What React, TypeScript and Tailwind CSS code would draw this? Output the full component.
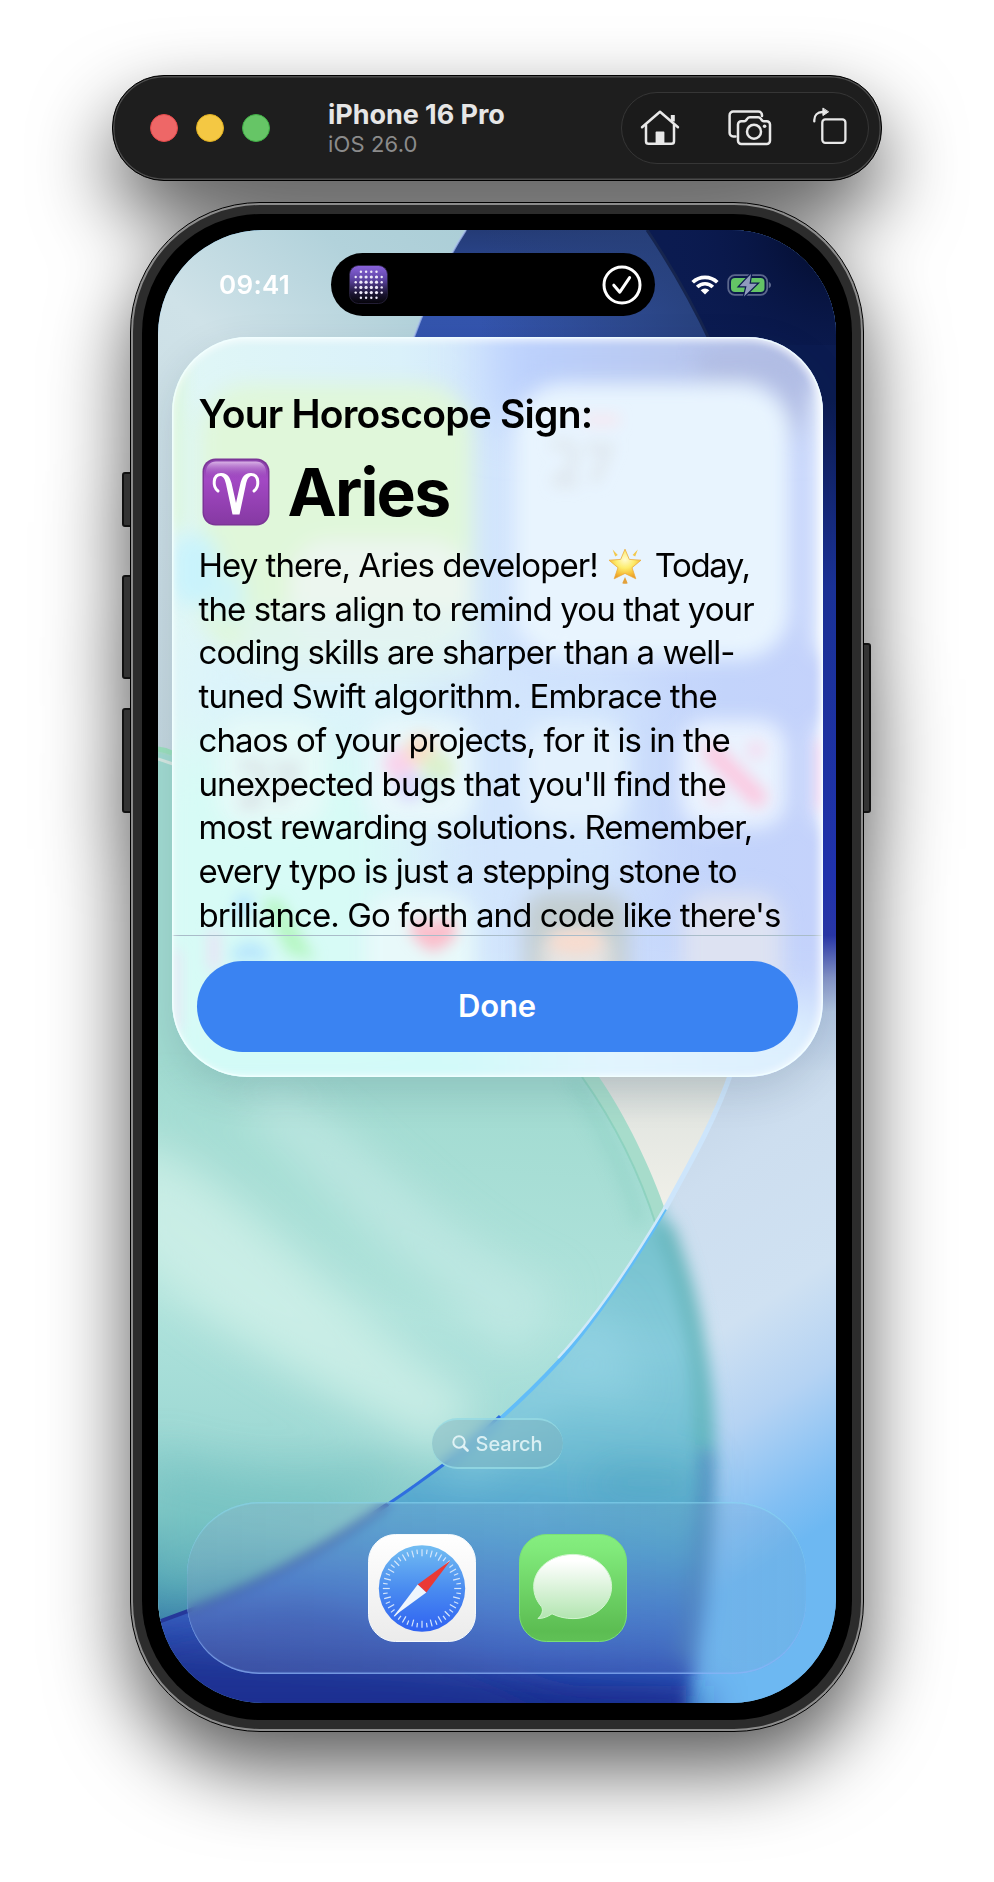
import React from "react";

const STORY = [
  { text: "the stars align to remind you that your", cls: "tracking-[-0.890px]" },
  { text: "coding skills are sharper than a well-", cls: "tracking-[-0.970px]" },
  { text: "tuned Swift algorithm. Embrace the", cls: "tracking-[-0.880px]" },
  { text: "chaos of your projects, for it is in the", cls: "tracking-[-0.970px]" },
  { text: "unexpected bugs that you'll find the", cls: "tracking-[-0.900px]" },
  { text: "most rewarding solutions. Remember,", cls: "tracking-[-0.940px]" },
  { text: "every typo is just a stepping stone to", cls: "tracking-[-0.940px]" },
  { text: "brilliance. Go forth and code like there's", cls: "tracking-[-0.940px]" },
];

function HomeIcon() {
  return (
    <svg width="40" height="36" viewBox="0 0 40 36" fill="none" stroke="#e8e8e8" strokeWidth="2.5" strokeLinecap="round" strokeLinejoin="round">
      <path d="M2 17.2 20 1.8 38 17.2" />
      <path d="M6 15v16.2a2.6 2.6 0 0 0 2.6 2.6h22.8a2.6 2.6 0 0 0 2.6-2.6V15" />
      <path d="M32.8 11.5V5" strokeWidth="4" strokeLinecap="butt" />
      <rect x="15.6" y="21.6" width="8.8" height="12" rx="0.8" fill="#e8e8e8" stroke="none" />
    </svg>
  );
}

function CameraIcon() {
  return (
    <svg width="44" height="36" viewBox="0 0 44 36" fill="none" stroke="#e8e8e8" strokeWidth="2.5" strokeLinecap="round" strokeLinejoin="round">
      <path d="M7.5 26.5H5.2a3.6 3.6 0 0 1-3.6-3.6V5.2a3.6 3.6 0 0 1 3.6-3.6h25.200a3.6 3.6 0 0 1 3.6 3.6V6" />
      <path d="M13.300 11.200h3c1 0 1.600-.5 2.200-1.400l.8-1.200c.7-1 1.400-1.400 2.500-1.400h8.400c1.100 0 1.800.4 2.500 1.400l.8 1.200c.6.9 1.200 1.400 2.200 1.400h3a3.300 3.300 0 0 1 3.300 3.300v16.200a3.300 3.300 0 0 1-3.300 3.300H13.300a3.300 3.300 0 0 1-3.300-3.300V14.500a3.300 3.300 0 0 1 3.300-3.300z" />
      <circle cx="26" cy="21.700" r="7" />
      <circle cx="36.600" cy="16.200" r="1.800" fill="#e8e8e8" stroke="none" />
    </svg>
  );
}

function RotateIcon() {
  return (
    <svg width="34" height="37" viewBox="0 0 34 37" fill="none" stroke="#e8e8e8" strokeWidth="2.3" strokeLinecap="round" strokeLinejoin="round">
      <rect x="9.300" y="12.400" width="23.100" height="23.400" rx="3" />
      <path d="M1.300 14.400V13c0-4.800 3.300-8 8-8H10" />
      <path d="M9.900 1.400v7.200L15.300 5z" fill="#e8e8e8" strokeWidth="1" />
    </svg>
  );
}

function Toolbar() {
  return (
    <div className="ml-[112px] flex h-[106px] w-[770px] items-center rounded-[52px] border border-black bg-[#1e1e1e] pl-[37px] pr-[12px] shadow-[inset_0_0_0_1.500px_#4c4c4c]">
      <div className="flex gap-[18px]">
        <div className="size-7 rounded-full border border-[#e5484a] bg-[#ee6767]" />
        <div className="size-7 rounded-full border border-[#e0b020] bg-[#f4c843]" />
        <div className="size-7 rounded-full border border-[#3fae45] bg-[#66c566]" />
      </div>
      <div className="ml-[58px] flex flex-1 flex-col pt-[2px]">
        <div className="whitespace-nowrap text-[27px] leading-[30px] font-bold tracking-[-0.050px] text-[#e6e6e6]">iPhone 16 Pro</div>
        <div className="whitespace-nowrap text-[22px] leading-[28px] tracking-[0.150px] text-[#8b8b8b]">iOS 26.0</div>
      </div>
      <div className="flex h-[72px] w-[248px] items-center rounded-[36px] border border-[#363636] bg-[#1b1b1b] pl-[18px]">
        <HomeIcon />
        <div className="ml-[48px] flex"><CameraIcon /></div>
        <div className="-mt-[5px] ml-[41px] flex"><RotateIcon /></div>
      </div>
    </div>
  );
}

function Wallpaper() {
  return (
    <svg className="absolute inset-0" width="678" height="1473" viewBox="158 230 678 1473">
      <defs>
        <linearGradient id="sky" x1="0" y1="1" x2="1" y2="0">
          <stop offset="0" stopColor="#c3d6de" />
          <stop offset="0.45" stopColor="#cfe2e8" />
          <stop offset="0.62" stopColor="#b2d2db" />
          <stop offset="1" stopColor="#9cc4cc" />
        </linearGradient>
        <linearGradient id="blue" x1="0" y1="0" x2="0" y2="1">
          <stop offset="0" stopColor="#243b76" />
          <stop offset="0.18" stopColor="#3455ae" />
          <stop offset="1" stopColor="#2a48a8" />
        </linearGradient>
        <linearGradient id="blueShade" gradientUnits="userSpaceOnUse" x1="480" y1="0" x2="700" y2="0">
          <stop offset="0" stopColor="#2a4276" stopOpacity="0" />
          <stop offset="1" stopColor="#27407a" stopOpacity="0.9" />
        </linearGradient>
        <linearGradient id="navy" gradientUnits="userSpaceOnUse" x1="0" y1="230" x2="0" y2="1080">
          <stop offset="0" stopColor="#0b1b50" />
          <stop offset="0.2" stopColor="#0b1b50" />
          <stop offset="0.42" stopColor="#1b329a" />
          <stop offset="0.76" stopColor="#2133b2" />
          <stop offset="0.83" stopColor="#2a37ab" />
          <stop offset="0.88" stopColor="#8797cb" />
          <stop offset="0.92" stopColor="#b4c8e2" />
          <stop offset="1" stopColor="#cbdced" />
        </linearGradient>
        <radialGradient id="corner" gradientUnits="userSpaceOnUse" cx="836" cy="230" r="180">
          <stop offset="0" stopColor="#020a26" />
          <stop offset="1" stopColor="#0b1b55" stopOpacity="0" />
        </radialGradient>
        <linearGradient id="right" gradientUnits="userSpaceOnUse" x1="640" y1="1120" x2="880" y2="1490">
          <stop offset="0" stopColor="#c5d6e8" />
          <stop offset="0.2" stopColor="#cddeef" />
          <stop offset="0.5" stopColor="#cfe1f2" />
          <stop offset="0.7" stopColor="#b5d3f3" />
          <stop offset="0.9" stopColor="#82bff3" />
          <stop offset="1" stopColor="#6db8f2" />
        </linearGradient>
        <linearGradient id="beige" gradientUnits="userSpaceOnUse" x1="0" y1="1070" x2="0" y2="1200">
          <stop offset="0" stopColor="#cfd7d6" />
          <stop offset="0.4" stopColor="#e4e7e2" />
          <stop offset="1" stopColor="#efefe8" />
        </linearGradient>
        <linearGradient id="green" gradientUnits="userSpaceOnUse" x1="200" y1="1070" x2="160" y2="1640">
          <stop offset="0" stopColor="#a2dbd1" />
          <stop offset="0.4" stopColor="#b0e3dc" />
          <stop offset="0.62" stopColor="#a0dad5" />
          <stop offset="0.78" stopColor="#7fc7c6" />
          <stop offset="0.9" stopColor="#4f9fb4" />
          <stop offset="1" stopColor="#3374a6" />
        </linearGradient>
        <linearGradient id="deep" gradientUnits="userSpaceOnUse" x1="600" y1="1240" x2="560" y2="1703">
          <stop offset="0" stopColor="#78c3cf" />
          <stop offset="0.22" stopColor="#86cbdb" />
          <stop offset="0.45" stopColor="#70bed4" />
          <stop offset="0.64" stopColor="#50a2cd" />
          <stop offset="0.8" stopColor="#3f76ca" />
          <stop offset="0.91" stopColor="#3055b9" />
          <stop offset="1" stopColor="#1b2f93" />
        </linearGradient>
        <clipPath id="lens">
          <path d="M732 1070C715 1120 692 1160 665 1209C645 1245 600 1315 560 1360C520 1403 480 1438 443 1465C380 1512 290 1575 158 1622V1703H836V1070Z" />
        </clipPath>
        <clipPath id="above">
          <path d="M732 1070C715 1120 692 1160 665 1209C645 1245 600 1315 560 1360C520 1403 480 1438 443 1465C380 1512 290 1575 158 1622V700H732Z" />
        </clipPath>
        <filter id="b8" x="-50%" y="-50%" width="200%" height="200%"><feGaussianBlur stdDeviation="8" /></filter>
        <filter id="b24" x="-50%" y="-50%" width="200%" height="200%"><feGaussianBlur stdDeviation="22" /></filter>
      </defs>
      <rect x="158" y="230" width="678" height="560" fill="url(#sky)" />
      <path d="M466 230Q436 276 411 345V700H836V230Z" fill="url(#blue)" />
      <path d="M466 230Q436 276 411 345V700H836V230Z" fill="url(#blueShade)" />
      <path d="M466 230Q436 276 411 345" stroke="#a9bff0" strokeWidth="2" fill="none" opacity="0.7" />
      <path d="M647 230Q684 285 712 345V1080H836V230Z" fill="url(#navy)" />
      <path d="M647 230Q684 285 712 345H836V230Z" fill="url(#corner)" />
      <path d="M647 230Q684 285 712 345" stroke="#16254f" strokeWidth="3" fill="none" />
      <rect x="540" y="1000" width="200" height="260" fill="url(#beige)" />

      <g clipPath="url(#above)">
        <path d="M158 749C380 790 545 960 599 1077C625 1115 650 1165 667 1215L560 1500L158 1640Z" fill="#a7dccb" />
        <path d="M158 753C360 800 525 970 582 1077C609 1115 637 1165 656 1225L560 1500L158 1640Z" fill="url(#green)" />
        <g filter="url(#b24)">
          <path d="M120 1140C230 1160 310 1300 480 1400L440 1450C320 1390 230 1340 120 1250Z" fill="#d3f2ea" opacity="0.75" />
          <path d="M270 1090C350 1110 430 1240 560 1290L520 1360C400 1270 340 1190 240 1110Z" fill="#c5eae6" opacity="0.7" />
          <path d="M158 1100C260 1130 330 1250 450 1300" stroke="#a4ded4" strokeWidth="20" fill="none" opacity="0.7" />
          <path d="M150 1450C230 1480 340 1490 420 1450L330 1530L150 1600Z" fill="#72bfc0" opacity="0.5" />
        </g>
        <path d="M570 1077C596 1115 624 1165 640 1225" stroke="#8dd0c4" strokeWidth="14" fill="none" opacity="0.5" filter="url(#b8)" />
        <path d="M578 1070L582 1077C609 1115 637 1165 656 1225L664 1240L680 1220C664 1165 625 1115 595 1060Z" fill="#a7dccb" />
        <path d="M582 1077C609 1115 637 1165 656 1225" stroke="#88cfbb" strokeWidth="2" fill="none" opacity="0.8" />
        <path d="M599 1077C625 1115 650 1165 667 1215L732 1150V1060H590Z" fill="url(#beige)" />
      </g>
      <path d="M158 749Q166 750 172 753" stroke="#9be0bd" strokeWidth="5" fill="none" />
      <path d="M158 759L173 764" stroke="#d6e8e2" strokeWidth="3" />

      <g clipPath="url(#lens)">
        <rect x="158" y="1060" width="678" height="643" fill="url(#right)" />
        <g filter="url(#b8)">
          <path d="M656 1195C702 1300 717 1380 716 1450C715 1560 704 1620 684 1723H130V1600L560 1340Z" fill="url(#deep)" />
          <path d="M664 1225C690 1290 704 1360 704 1450" stroke="#5fb1b5" strokeWidth="18" fill="none" opacity="0.75" />
          <path d="M706 1450C706 1540 696 1600 684 1660" stroke="#4a80bb" strokeWidth="16" fill="none" opacity="0.7" />
        </g>
        <g filter="url(#b24)">
          <path d="M600 1300L650 1400L560 1400L470 1480L440 1470Z" fill="#9ad7e6" opacity="0.6" />
          <path d="M600 1465L700 1465V1500H580Z" fill="#3f98b8" opacity="0.45" />
          <path d="M130 1640L300 1600L420 1640L560 1700V1740H130Z" fill="#2a3d9c" opacity="0.4" />
          <path d="M150 1700H700V1730H150Z" fill="#16298c" />
        </g>
      </g>
      <path d="M732 1070C715 1120 692 1160 665 1209" stroke="#cde5fb" strokeWidth="5" fill="none" />
      <path d="M665 1209C645 1245 600 1315 560 1360C520 1403 480 1438 443 1465" stroke="#62bdf8" strokeWidth="4" fill="none" />
      <path d="M665 1207C643 1244 600 1313 558 1358" stroke="#cfe9f8" strokeWidth="2.500" fill="none" />
      <path d="M500 1416C480 1435 463 1450 443 1465C420 1482 400 1496 388 1504" stroke="#2f6fe0" strokeWidth="3" fill="none" />
      <path d="M388 1504C320 1552 250 1590 158 1622" stroke="#25389a" strokeWidth="4" fill="none" />
    </svg>
  );
}

function StatusBar() {
  const dots = [0, 1, 2, 3, 4, 5];
  return (
    <div className="flex h-[107px] w-full items-start pt-[23px]">
      <div className="ml-[61px] w-[112px] text-[26px] leading-[63px] font-semibold tracking-[0.300px] text-white">09:41</div>
      <div className="flex h-[63px] w-[324px] items-center justify-between rounded-[31.500px] bg-black px-[13px] pl-[18px]">
        <svg width="39" height="39" viewBox="0 0 39 39">
          <defs>
            <linearGradient id="appg" x1="0" y1="0" x2="0" y2="1">
              <stop offset="0" stopColor="#8a63dc" />
              <stop offset="0.35" stopColor="#5f45a6" />
              <stop offset="0.75" stopColor="#1a1430" />
              <stop offset="1" stopColor="#050409" />
            </linearGradient>
          </defs>
          <rect x="0.500" y="0.500" width="38" height="38" rx="9" fill="url(#appg)" stroke="#2b2540" strokeWidth="0.800" />
          {dots.map((r) =>
            dots.map((c) => {
              const edge = (r === 0 || r === 5 ? 1 : 0) + (c === 0 || c === 5 ? 1 : 0);
              if (edge === 2) return null;
              return <circle key={`${r}-${c}`} cx={6.700 + c * 5.200} cy={6.800 + r * 5.200} r={edge ? 1.200 : 1.600} fill="#efeafa" />;
            })
          )}
        </svg>
        <svg width="40" height="40" viewBox="0 0 40 40" fill="none" stroke="#fff" strokeWidth="3" strokeLinecap="round" strokeLinejoin="round">
          <circle cx="20" cy="20" r="18" />
          <path d="m11.800 20.200 6 7 9.800-14.600" />
        </svg>
      </div>
      <div className="ml-[36px] flex h-[63px] items-center">
        <svg width="28" height="20" viewBox="0 0 28 20">
          <g fill="none" stroke="#fff" strokeWidth="3.700">
            <path d="M1.700 7.300a17.600 17.600 0 0 1 24.600 0" />
            <path d="M6.200 12a11 11 0 0 1 15.600 0" />
          </g>
          <path d="M14 19.600 9.700 15.200a6.200 6.200 0 0 1 8.600 0z" fill="#fff" />
        </svg>
        <svg className="ml-[8px]" width="46" height="24" viewBox="0 0 46 24">
          <rect x="1.200" y="2.200" width="39" height="19.600" rx="6.500" fill="none" stroke="#5b678c" strokeWidth="1.800" />
          <path d="M41.800 9v6.200c1.400-.5 2.200-1.700 2.200-3.100s-.8-2.600-2.200-3.100z" fill="#5b678c" />
          <rect x="4" y="5" width="33.500" height="14" rx="4" fill="#64c466" />
          <path d="M24 1 12.500 13.300h7L17 23.500 30 10.700h-7.500z" fill="#8f9bbd" stroke="#0c1a50" strokeWidth="2.500" paintOrder="stroke" />
        </svg>
      </div>
    </div>
  );
}

function CardBackdrop() {
  return (
    <svg className="absolute inset-0" width="651" height="740" viewBox="172 337 651 740">
      <defs>
        <linearGradient id="cbase" x1="0" y1="0" x2="1" y2="0">
          <stop offset="0" stopColor="#e0f7f6" />
          <stop offset="0.35" stopColor="#daf1fa" />
          <stop offset="0.55" stopColor="#cfe1fd" />
          <stop offset="0.85" stopColor="#c3d4fb" />
          <stop offset="1" stopColor="#c4d2fb" />
        </linearGradient>
        <linearGradient id="cbot" x1="0" y1="0" x2="1" y2="0">
          <stop offset="0" stopColor="#d2fbf8" />
          <stop offset="0.45" stopColor="#d2faf9" />
          <stop offset="0.65" stopColor="#e2f5fe" />
          <stop offset="1" stopColor="#dceefe" />
        </linearGradient>
        <linearGradient id="ctop" gradientUnits="userSpaceOnUse" x1="500" y1="0" x2="823" y2="0">
          <stop offset="0" stopColor="#bcd2ff" />
          <stop offset="0.55" stopColor="#b8c7ef" />
          <stop offset="1" stopColor="#b0bbe3" />
        </linearGradient>
        <filter id="s6" x="-50%" y="-50%" width="200%" height="200%"><feGaussianBlur stdDeviation="7" /></filter>
        <filter id="s10" x="-50%" y="-50%" width="200%" height="200%"><feGaussianBlur stdDeviation="10" /></filter>
        <filter id="s30" x="-50%" y="-50%" width="200%" height="200%"><feGaussianBlur stdDeviation="26" /></filter>
      </defs>
      <rect x="172" y="337" width="651" height="740" fill="url(#cbase)" />
      <g filter="url(#s30)">
        <rect x="150" y="1000" width="700" height="120" fill="url(#cbot)" />
        <rect x="150" y="750" width="240" height="300" fill="#d7fbf6" />
        <rect x="490" y="310" width="330" height="110" fill="url(#ctop)" />
        <rect x="470" y="680" width="160" height="220" fill="#d3e6fd" />
        <rect x="180" y="640" width="220" height="90" fill="#dcf4fb" />
      </g>
      <g filter="url(#s10)">
        <rect x="200" y="384" width="272" height="270" rx="50" fill="#e0f7da" />
        <rect x="290" y="540" width="180" height="110" rx="40" fill="#ecf6ef" />
        <rect x="240" y="610" width="240" height="70" rx="20" fill="#e0f4f4" opacity="0.7" />
        <rect x="172" y="535" width="46" height="70" rx="20" fill="#c9f3fc" />
        <rect x="212" y="570" width="32" height="50" rx="16" fill="#cff4f8" />
        <rect x="166" y="360" width="14" height="170" fill="#daf8cf" />
        <path d="M700 350H780Q806 352 808 400L796 440L780 380H700Z" fill="#b0bbe2" opacity="0.8" />
        <rect x="514" y="383" width="276" height="276" rx="50" fill="#e8f4fe" />
        <rect x="813" y="383" width="40" height="274" rx="16" fill="#e9f3fe" />
        <rect x="218" y="718" width="108" height="108" rx="28" fill="#e6f9f8" />
        <rect x="366" y="718" width="108" height="108" rx="28" fill="#e8f7fb" />
        <rect x="680" y="720" width="106" height="108" rx="28" fill="#eaf3fe" />
        <rect x="524" y="722" width="104" height="104" rx="28" fill="#e3f1fd" />
        <rect x="813" y="720" width="40" height="108" rx="16" fill="#e9f1fe" />
        <rect x="366" y="894" width="108" height="104" rx="28" fill="#e8f9fa" />
        <rect x="524" y="892" width="104" height="104" rx="24" fill="#c2cdd0" />
        <rect x="542" y="936" width="68" height="60" rx="14" fill="#e6e5e4" />
        <rect x="682" y="892" width="100" height="104" rx="28" fill="#dde2f2" />
      </g>
      <g filter="url(#s6)">
        <ellipse cx="576" cy="942" rx="28" ry="12" fill="#f8dccf" />
        <path d="M585 420h34" stroke="#f7e6f0" strokeWidth="10" />
        <path d="M552 446q22-6 22 10T554 482h24M586 448h22L594 482" stroke="#dfe7ee" strokeWidth="9" fill="none" />
        <path d="M713 753L757 797" stroke="#fbcbe2" strokeWidth="20" strokeLinecap="round" />
        <circle cx="756" cy="750" r="9" fill="#f4dcf0" />
        <circle cx="715" cy="796" r="9" fill="#f2ddf1" />
        <rect x="818" y="740" width="12" height="70" fill="#f3c3ea" />
        <circle cx="400" cy="764" r="16" fill="#f9d3ec" />
        <circle cx="421" cy="750" r="16" fill="#f8dfc9" />
        <circle cx="438" cy="768" r="16" fill="#dcf1cd" />
        <circle cx="410" cy="787" r="14" fill="#dad9fb" />
        <circle cx="432" cy="787" r="12" fill="#d2eeea" />
        <path d="M240 768q22-10 22 8T240 804h22M272 768h22L278 804" stroke="#dae6e8" strokeWidth="10" fill="none" />
        <path d="M410 926q10-18 22 0q14-18 24 0q4 16-24 26q-22-12-22-26z" fill="#fbbdcb" />
        <path d="M262 900L280 900L316 960L288 954Z" fill="#b6f6c2" />
        <path d="M246 895L240 920M236 960q14-20 28 0" stroke="#b8e6fd" strokeWidth="16" fill="none" />
        <path d="M214 930V970" stroke="#ecdff5" strokeWidth="10" />
        <path d="M176 950V1030" stroke="#f0dcf5" strokeWidth="6" />
      </g>
    </svg>
  );
}

function AriesBadge() {
  return (
    <svg width="68" height="68" viewBox="0 0 68 68">
      <defs>
        <linearGradient id="ar" x1="0" y1="0" x2="0" y2="1">
          <stop offset="0" stopColor="#8a43ab" />
          <stop offset="0.3" stopColor="#a349c4" />
          <stop offset="1" stopColor="#8639a3" />
        </linearGradient>
        <linearGradient id="arh" x1="0" y1="0" x2="0" y2="1">
          <stop offset="0" stopColor="#d9b2e6" />
          <stop offset="1" stopColor="#a850c8" stopOpacity="0" />
        </linearGradient>
      </defs>
      <rect x="0.500" y="0.500" width="67" height="67" rx="13" fill="#7b3596" />
      <rect x="2" y="2" width="64" height="64" rx="12" fill="url(#ar)" />
      <path d="M4 20V14C4 8 8 3.500 14 3.500H54C60 3.500 64 8 64 14V20Z" fill="url(#arh)" />
      <path d="M16 33C10.500 29 10.500 16.500 19 16.500M52 33C57.500 29 57.500 16.500 49 16.500" fill="none" stroke="#fff" strokeWidth="3" strokeLinecap="round" />
      <path d="M18.500 15C26 14.500 28 20 29.500 25L34 45L38.500 25C40 20 42 14.500 49.500 15L49.500 18C46 18.500 45 22 44 26L37.500 56.500H30.500L24 26C23 22 22 18.500 18.500 18Z" fill="#fff" />
    </svg>
  );
}

function GlowingStar() {
  return (
    <svg className="mr-[13px] ml-[10px] inline-block" width="34" height="36" viewBox="0 0 34 36">
      <defs>
        <radialGradient id="st" cx="0.5" cy="0.35" r="0.65">
          <stop offset="0" stopColor="#fffbd0" />
          <stop offset="0.45" stopColor="#fdec6b" />
          <stop offset="0.8" stopColor="#f6bb35" />
          <stop offset="1" stopColor="#e89a2c" />
        </radialGradient>
      </defs>
      <path d="M17 1.200l4.300 10.200 11.700.8-9 7.500 3.800 11.100L17 25.400 6.200 30.800 10 19.700l-9-7.500 11.700-.8z" fill="url(#st)" stroke="#eba93a" strokeWidth="0.800" strokeLinejoin="round" />
      <path d="M4.600 1.600l5.200 5.300-2.600 1.600zM29.800 1.600l-5.200 5.300 2.600 1.600z" fill="#f2c84b" />
      <path d="M17 29l2.700 6.200c-1.500.8-3.900.8-5.400 0z" fill="#e2a03a" />
    </svg>
  );
}

function HoroscopeCard() {
  return (
    <div className="relative mx-auto h-[740px] w-[651px] overflow-hidden rounded-[75px] shadow-[0_14px_40px_rgba(20,50,80,0.14)]">
      <CardBackdrop />
      <div className="relative flex h-full flex-col pt-[53px]">
        <div className="pl-[27px] text-[39px] leading-[48px] font-semibold tracking-[-0.780px] whitespace-nowrap text-black">Your Horoscope Sign:</div>
        <div className="mt-[14px] flex h-[80px] items-center pl-[30px]">
          <AriesBadge />
          <div className="ml-[18px] text-[66px] leading-[80px] font-bold tracking-[-1.800px] text-black">Aries</div>
        </div>
        <div className="mt-[12px] h-[392px] overflow-hidden border-b border-[#a9bcc9] pl-[27px] text-[33px] leading-[43.700px] text-black">
          <div className="flex h-[43.700px] items-center whitespace-nowrap tracking-[-0.960px]">
            <span>Hey there, Aries developer!</span>
            <GlowingStar />
            <span className="tracking-[-1.400px]">Today,</span>
          </div>
          {STORY.map((line) => (
            <div key={line.text} className={`whitespace-nowrap ${line.cls}`}>{line.text}</div>
          ))}
        </div>
        <div className="mx-[25px] mt-[25px] flex h-[91px] items-center justify-center rounded-[45.500px] bg-[#3a83f2] text-[31px] font-semibold tracking-[-0.200px] text-white">Done</div>
      </div>
      <div className="absolute inset-0 rounded-[75px] shadow-[inset_0_0_0_1.500px_rgba(240,255,255,0.75),inset_0_3px_10px_rgba(255,255,255,0.6),inset_-3px_0_10px_rgba(255,255,255,0.7)]" />
    </div>
  );
}

function SafariIcon() {
  const ticks = Array.from({ length: 48 }, (_, i) => i);
  return (
    <svg width="108" height="108" viewBox="0 0 108 108">
      <defs>
        <linearGradient id="sfb" x1="0" y1="0" x2="0" y2="1">
          <stop offset="0" stopColor="#ffffff" />
          <stop offset="1" stopColor="#ebebeb" />
        </linearGradient>
        <linearGradient id="sfd" x1="0" y1="0" x2="0" y2="1">
          <stop offset="0" stopColor="#72bdf2" />
          <stop offset="0.5" stopColor="#4a8cf0" />
          <stop offset="1" stopColor="#2f62f2" />
        </linearGradient>
      </defs>
      <rect x="0.500" y="0.500" width="107" height="107" rx="27" fill="url(#sfb)" stroke="#f6fafc" />
      <circle cx="54" cy="54.500" r="43.200" fill="url(#sfd)" />
      {ticks.map((i) => (
        <path key={i} d={i % 2 ? "M54 15.300v4.600" : "M54 15.300v7"} stroke="#d5e6fb" strokeWidth="1.200" transform={`rotate(${i * 7.500} 54 54.500)`} />
      ))}
      <path d="M82.500 26.500L49.700 50.600L58.300 58.400Z" fill="#ea3a36" />
      <path d="M25.500 82.500L49.700 50.600L58.300 58.400Z" fill="#eff6fd" />
    </svg>
  );
}

function MessagesIcon() {
  return (
    <svg width="108" height="108" viewBox="0 0 108 108">
      <defs>
        <linearGradient id="mg" x1="0" y1="0" x2="0" y2="1">
          <stop offset="0" stopColor="#85ee7f" />
          <stop offset="0.15" stopColor="#80e97a" />
          <stop offset="0.9" stopColor="#5cbd52" />
          <stop offset="1" stopColor="#60c156" />
        </linearGradient>
        <linearGradient id="mb" x1="0" y1="0" x2="0" y2="1">
          <stop offset="0.1" stopColor="#ffffff" />
          <stop offset="1" stopColor="#b2e5b0" />
        </linearGradient>
      </defs>
      <rect x="0.500" y="0.500" width="107" height="107" rx="27" fill="url(#mg)" stroke="#7ae173" strokeWidth="1" />
      <path d="M54 20.400C32 20.400 14.700 34.500 14.700 52.500C14.700 61.500 18.500 68 22.300 72.500C24.500 75.500 23.500 80.500 19 84.500C24.500 84.600 29 82.500 33 79.800C39.500 83 46.500 84.600 54 84.600C76 84.600 92.600 70.500 92.600 52.500C92.600 34.500 76 20.400 54 20.400Z" fill="url(#mb)" stroke="#d2f5d0" strokeWidth="1" />
    </svg>
  );
}

function Phone() {
  return (
    <div className="relative mt-[21px] ml-[130px] h-[1530px] w-[734px] rounded-[130px]">
      <div className="absolute top-[270px] -left-[8px] h-[55px] w-[12px] rounded-[3px] border-2 border-[#111] bg-[#333]" />
      <div className="absolute top-[373px] -left-[8px] h-[104px] w-[12px] rounded-[3px] border-2 border-[#111] bg-[#333]" />
      <div className="absolute top-[506px] -left-[8px] h-[105px] w-[12px] rounded-[3px] border-2 border-[#111] bg-[#333]" />
      <div className="absolute top-[441px] -right-[7px] h-[170px] w-[12px] rounded-[3px] border-2 border-[#111] bg-[#333]" />
      <div className="relative h-full w-full rounded-[130px] border border-black bg-[#8c8c8c] p-[2px]">
        <div className="h-full w-full rounded-[127px] bg-[#2c2c2c] p-[9px]">
          <div className="h-full w-full rounded-[119px] bg-black px-[16px] pt-[16px]">
            <div className="relative h-[1473px] w-[678px] overflow-hidden rounded-[105px] bg-[#6db8f2]">
              <Wallpaper />
              <div className="relative flex h-full flex-col">
                <StatusBar />
                <HoroscopeCard />
                <div className="mt-[341px] flex h-[51px] w-[131px] items-center self-center rounded-[25.500px] border-y-2 border-y-[#9fe6ee]/60 bg-[#7fb3bf]/50 pl-[20px] backdrop-blur-[6px]">
                  <svg width="17" height="17" viewBox="0 0 17 17" fill="none" stroke="#dff2f5" strokeLinecap="round">
                    <circle cx="7" cy="7" r="5.700" strokeWidth="2" />
                    <path d="m11.500 11.500 4 4" strokeWidth="2.600" />
                  </svg>
                  <div className="ml-[7px] text-[20px] leading-[24px] font-medium text-[#d9eff3]">Search</div>
                </div>
                <div className="mt-[33px] ml-[29px] flex h-[172px] w-[619px] items-center justify-center gap-[43px] rounded-[72px] bg-linear-to-r from-[#94a6cc]/25 via-[#8fa6d8]/20 to-[#7896b4]/12 pl-[2px] shadow-[inset_0_1.500px_1px_rgba(140,225,250,0.5),inset_0_-1.500px_1px_rgba(140,180,250,0.75)] backdrop-blur-[6px]">
                  <SafariIcon />
                  <MessagesIcon />
                </div>
              </div>
            </div>
          </div>
        </div>
      </div>
    </div>
  );
}

export default function App() {
  return (
    <div className="h-[1882px] w-[994px] overflow-hidden bg-white font-[Inter,'Liberation_Sans',sans-serif]">
      <div className="flex h-full flex-col pt-[75px] drop-shadow-[0_36px_40px_rgba(0,0,0,0.65)]">
        <Toolbar />
        <Phone />
      </div>
    </div>
  );
}
